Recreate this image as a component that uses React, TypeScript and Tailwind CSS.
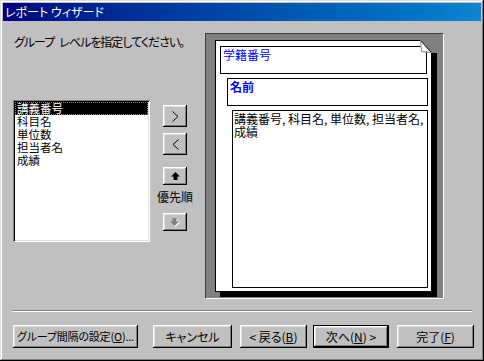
import React from 'react';

const font = "font-['MS_UI_Gothic','Noto_Sans_CJK_JP',sans-serif] [font-feature-settings:'palt']";

const raised =
  'shadow-[inset_-1px_-1px_0_#000,inset_1px_1px_0_#fff,inset_-2px_-2px_0_#808080,inset_2px_2px_0_#dfdfdf]';
const sunken =
  'shadow-[inset_1px_1px_0_#808080,inset_-1px_-1px_0_#fff,inset_2px_2px_0_#000,inset_-2px_-2px_0_#dfdfdf]';

const fields = ['講義番号', '科目名', '単位数', '担当者名', '成績'];

function Btn({
  w,
  children,
  isDefault = false,
  size = 'text-[12px]',
}: {
  w: string;
  children: React.ReactNode;
  isDefault?: boolean;
  size?: string;
}) {
  const label = <span className="whitespace-nowrap">{children}</span>;
  if (isDefault) {
    return (
      <div className={`${w} h-[23px] border border-black bg-[#c0c0c0]`}>
        <div className={`flex h-full items-center justify-center ${size} leading-none text-black ${raised}`}>
          {label}
        </div>
      </div>
    );
  }
  return (
    <div className={`${w} flex h-[23px] items-center justify-center bg-[#c0c0c0] ${size} leading-none text-black ${raised}`}>
      {label}
    </div>
  );
}

function ArrowBtn({ h, children }: { h: string; children: React.ReactNode }) {
  return (
    <div className={`flex w-[24px] ${h} items-center justify-center bg-[#c0c0c0] ${raised}`}>{children}</div>
  );
}

export default function App() {
  return (
    <div
      className={`flex h-[361px] w-[484px] flex-col bg-[#c0c0c0] p-[3px] ${font} shadow-[inset_-1px_-1px_0_#000,inset_1px_1px_0_#dfdfdf,inset_-2px_-2px_0_#808080,inset_2px_2px_0_#fff]`}
    >
      <div className="h-[18px] bg-linear-to-r from-[#000080] to-[#1084d0] pl-[2px] text-[12px] leading-[18px] text-white">
        レポート ウィザード
      </div>

      <div className="flex pl-[10px] pt-[12px]">
        <div className="w-[192px]">
          <div className="mt-[2px] h-[14px] whitespace-nowrap pl-[1px] text-[12px] leading-[14px] tracking-[-1px] text-black">
            グループ<span className="ml-[5px]">レベルを指定してください。</span>
          </div>
          <div className="mt-[51px] flex">
            <div className={`h-[142px] w-[137px] bg-white p-[2px] ${sunken}`}>
              {fields.map((f, i) => (
                <div
                  key={f}
                  className={`h-[13px] pl-[2px] text-[11.5px] leading-[13px] ${
                    i === 0 ? 'bg-black text-white outline-1 outline-dotted outline-offset-[-1px] outline-[#808080]' : 'text-black'
                  }`}
                >
                  {f}
                </div>
              ))}
            </div>
            <div className="ml-[13px] flex w-[24px] flex-col">
              <div className="mt-[5px]">
                <ArrowBtn h="h-[22px]">
                  <svg width="7" height="11" viewBox="0 0 7 11">
                    <polyline points="0.5,0.5 6,5.5 0.5,10.5" fill="none" stroke="#000" strokeWidth="1" />
                  </svg>
                </ArrowBtn>
              </div>
              <div className="mt-[6px]">
                <ArrowBtn h="h-[22px]">
                  <svg width="7" height="11" viewBox="0 0 7 11">
                    <polyline points="6.5,0.5 1,5.5 6.5,10.5" fill="none" stroke="#000" strokeWidth="1" />
                  </svg>
                </ArrowBtn>
              </div>
              <div className="mt-[12px]">
                <ArrowBtn h="h-[18px]">
                  <svg width="9" height="8" viewBox="0 0 9 8">
                    <polygon points="4.5,0 9,4.5 6.5,4.5 6.5,8 2.5,8 2.5,4.5 0,4.5" fill="#000" />
                  </svg>
                </ArrowBtn>
              </div>
              <div className="mt-[5px] flex h-[14px] justify-center whitespace-nowrap text-[12px] leading-[14px] text-black">
                優先順
              </div>
              <div className="mt-[9px]">
                <ArrowBtn h="h-[18px]">
                  <svg width="10" height="9" viewBox="0 0 10 9">
                    <polygon points="5.5,9 10,4.5 7.5,4.5 7.5,1 3.5,1 3.5,4.5 1,4.5" fill="#fff" />
                    <polygon points="4.5,8 9,3.5 6.5,3.5 6.5,0 2.5,0 2.5,3.5 0,3.5" fill="#808080" />
                  </svg>
                </ArrowBtn>
              </div>
            </div>
          </div>
        </div>

        <div className="h-[266px] w-[239px] border border-t-[#404040] border-l-[#404040] border-b-white border-r-white bg-[#808080] pl-[9px] pt-[6px]">
          <div className="relative h-[252px] w-[217px] border border-black bg-white shadow-[5px_5px_0_#000]">
            <svg className="absolute -right-[6px] -top-[1px]" width="17" height="13" viewBox="0 0 17 13">
              <polygon points="0,0 17,0 17,13 11,13 11,12" fill="#808080" />
              <polygon points="0,0 1,11 11,12" fill="#fff" />
              <polyline points="0.5,0.5 11,12" fill="none" stroke="#000" strokeWidth="1" />
              <polyline points="0.5,0.5 1.5,11.5 11,12.5" fill="none" stroke="#808080" strokeWidth="1" />
            </svg>
            <div className="ml-[4px] mt-[5px] h-[28px] w-[207px] border border-black pl-[2px] pt-[1px] text-[12px] leading-[13px] text-[#0000ff]">
              学籍番号
            </div>
            <div className="ml-[11px] mt-[4px] h-[28px] w-[201px] border border-black pl-[2px] pt-[1px] text-[12px] font-bold leading-[13px] text-[#0000ff]">
              名前
            </div>
            <div className="ml-[16px] mt-[4px] h-[178px] w-[196px] whitespace-nowrap border border-black pl-[1px] pt-[1px] text-[12px] leading-[13px] text-black">
              講義番号, 科目名, 単位数, 担当者名,
              <br />
              成績
            </div>
          </div>
        </div>
      </div>

      <div className="ml-[9px] mt-[11px] h-[2px] w-[460px] border-t border-b border-t-[#808080] border-b-white" />

      <div className="ml-[10px] mt-[13px] flex">
        <Btn w="w-[125px]" size="text-[11px] tracking-[-0.2px]">
          グループ間隔の設定(<span className="underline">O</span>)...
        </Btn>
        <div className="ml-[15px]">
          <Btn w="w-[79px]">キャンセル</Btn>
        </div>
        <div className="ml-[8px]">
          <Btn w="w-[67px]">
            &lt; 戻る(<span className="underline">B</span>)
          </Btn>
        </div>
        <div className="ml-[6px]">
          <Btn w="w-[76px]" isDefault>
            次へ(<span className="underline">N</span>) &gt;
          </Btn>
        </div>
        <div className="ml-[8px]">
          <Btn w="w-[77px]">
            完了(<span className="underline">F</span>)
          </Btn>
        </div>
      </div>
    </div>
  );
}
